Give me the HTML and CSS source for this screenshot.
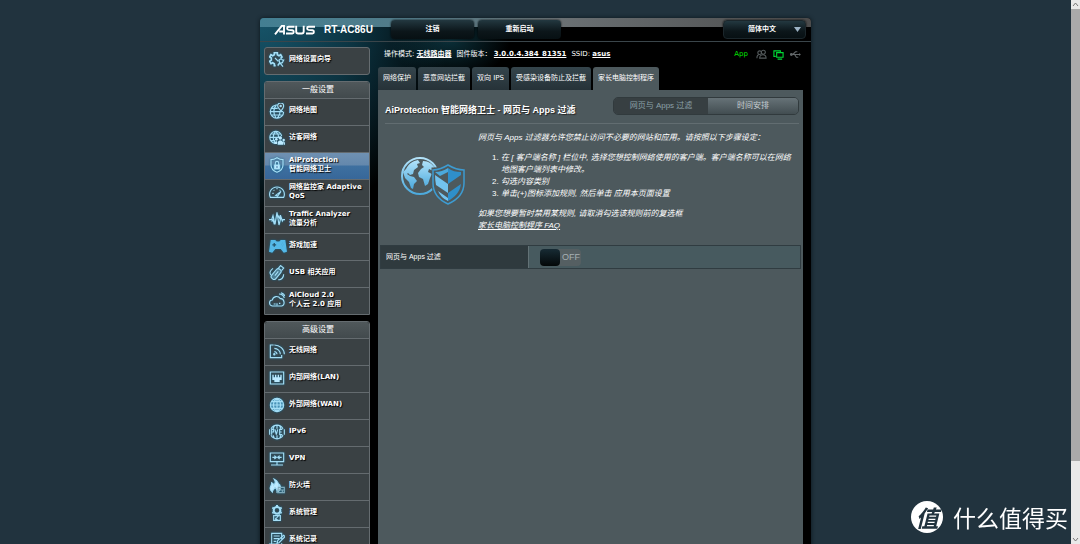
FILE: index.html
```html
<!DOCTYPE html>
<html lang="zh-CN">
<head>
<meta charset="utf-8">
<title>AiProtection - 网页与 Apps 过滤</title>
<link rel="stylesheet" href="styles.css">
</head>
<body>
<div class="viewport">
  <div class="shell">
    <header class="topbar">
      <a class="brand" href="#">
        <svg class="logo" viewBox="0 0 42 10" role="img" aria-label="ASUS"><g fill="none" stroke="#fff" stroke-width="1.9"><path d="M1 9.4 7.8.9H10V9.4M5.2 6.5H9"/><path d="M20.5 1.7h-6c-1.8 0-1.8 3 0 3.2l3.8.3c2 .2 1.8 3.3 0 3.3H12"/><path d="M22.2.8v5.7c0 1.4.6 2 2 2h3.5c1.4 0 2-.6 2-2V.8"/><path d="M41 1.7h-6.5c-1.8 0-1.8 3 0 3.2l4 .3c2 .2 1.8 3.3 0 3.3H32"/></g></svg>
        <span class="model">RT-AC86U</span>
      </a>
      <button class="top-btn">注销</button>
      <button class="top-btn">重新启动</button>
      <div class="language">
        <select aria-label="语言"><option>简体中文</option></select>
        <svg class="arrow" viewBox="0 0 7 5"><path d="M0 0h7L3.500 5z" fill="#9db4c6"/></svg>
      </div>
    </header>
    <div class="columns">
      <nav class="sidebar">
        <a class="item wizard" href="#"><svg viewBox="0 0 24 24"><path d="M10 20.500H8v-3L5.500 16l-2.500 1.500-2-3.500 2.500-2V9L1 7.500 3 4l2.500 1.500L8 4V1h4.500v3L15 5.500 17.500 4l2 3.500-2 1.500" stroke-width="2.500"/><path d="M9 9l5 5M13 20l3-4-1-4 3-2 2 2 2 0-2 4-4 1-3 4M16 16l5 6"/></svg><span>网络设置向导</span></a>
        <section class="group">
          <h2>一般设置</h2>
          <a class="item" href="#"><svg viewBox="0 0 24 24"><path d="M13 3a10 10 0 1 0 9 10M1 13h20M3 8h10M3 18h16M11 3c-5 5-5 14 0 20M12 23c4-4 5-9 4-11"/><path fill="#3c4245" d="M18 12c-3-4-5-5-5-7.500a4.500 4.500 0 0 1 9 0C22 7 21 8 18 12z"/><circle cx="17.500" cy="4.500" r="1"/></svg><span>网络地图</span></a>
          <a class="item" href="#"><svg viewBox="0 0 24 24"><path d="M19 9A9 9 0 1 0 9 20M1 11h17M3 6h14M3 16h6M10 2c-5 5-5 13 0 18M10 2c4 4 5 7 4 10"/><g fill="#bceaff" stroke="none"><circle cx="17" cy="12" r="2.500"/><circle cx="11" cy="14" r="2"/><circle cx="22" cy="15" r="1.800"/><path d="M13 22v-4q4-5 8 0v4zM8 21q0-5 4-4v4zM21 17q3 0 3 5h-2z"/></g></svg><span>访客网络</span></a>
          <a class="item active" href="#"><svg viewBox="0 0 24 24"><path d="M12 1C9 3 6 4 3 4v8c0 5 4 9 9 11 5-2 9-6 9-11V4c-3 0-6-1-9-3z"/><path fill="#bceaff" d="M8 12h8v6H8z"/><path d="M9.500 12V9a2.500 2.500 0 0 1 5 0v3"/><path d="M12 14v2" stroke="#326496"/></svg><span>AiProtection<br>智能网络卫士</span></a>
          <a class="item" href="#"><svg viewBox="0 0 24 24"><path d="M2 20a11 11 0 1 1 20 0zM5 14h2M7 9l1 1M12 6v2M17 9l-1 1M10 17l8-6-5 7z"/></svg><span>网络监控家 Adaptive QoS</span></a>
          <a class="item" href="#"><svg viewBox="0 0 24 24"><path d="M0 13h4l2-6 3 13L12 2l3 19 3-12 2 6 1-2h3M4 16l2-3 2 7M13 6l3 5 1-5"/></svg><span>Traffic Analyzer<br>流量分析</span></a>
          <a class="item" href="#"><svg class="wide" viewBox="0 0 24 20"><path fill="#55b9e8" stroke="#55b9e8" d="M3 3h5l2 2h4l2-2h5l2 14-3 1-4-5H8l-4 5-3-1z"/><path stroke="#24536a" d="M7 6v5M4.500 8.500h5M16 8h.1M19 8h.1M17.500 6h.1M17.500 10h.1"/></svg><span>游戏加速</span></a>
          <a class="item" href="#"><svg viewBox="0 0 24 24"><g transform="rotate(40 12 12)"><rect x="8" y="5" width="8" height="18" rx="3.500" fill="#4c7f96"/><path d="M9 5V0h6v5M12 9v8"/></g><path d="M3 15C0 12 2 8 6 5M14 22c4 1 8-3 8-8"/></svg><span>USB 相关应用</span></a>
          <a class="item" href="#"><svg viewBox="0 0 24 24"><path d="M5 21C-1 20 0 12 5 12c1-6 9-7 12-2 6-1 8 10 2 11zM7 18h3M12 17v3M15 17h2M15 3c4 0 7 3 8 6M18 1c3 1 5 3 6 5"/></svg><span>AiCloud 2.0<br>个人云 2.0 应用</span></a>
        </section>
        <section class="group">
          <h2>高级设置</h2>
          <a class="item" href="#"><svg viewBox="0 0 24 24"><path d="M7 3H2v19h17v-4"/><path d="M8 3c8 0 15 6 15 14M8 8c5 0 9 4 9 9M8 13c2 0 4 2 4 4"/><circle cx="8" cy="17" r="1"/></svg><span>无线网络</span></a>
          <a class="item" href="#"><svg viewBox="0 0 24 24"><path d="M2 3h20v18H2z"/><path fill="#bceaff" stroke="none" d="M5 7h2v4h2V7h2v4h2V7h2v4h2V7h2v8h-3v3H8v-3H5z"/></svg><span>内部网络(LAN)</span></a>
          <a class="item" href="#"><svg viewBox="0 0 24 24"><circle cx="12" cy="12" r="10" fill="#4993b7"/><path d="M2 12h20M4 7h16M4 17h16M12 2v20M12 2c-7 5-7 15 0 20M12 2c7 5 7 15 0 20"/></svg><span>外部网络(WAN)</span></a>
          <a class="item" href="#"><svg viewBox="0 0 24 24"><path d="M3 7c4-7 14-7 18 0M3 17c4 7 14 7 18 0M12 2v5M12 17v5M8 3L6 7M16 3l2 4M6 17l2 4M18 17l-2 4M1 8v8M4 16V8h3v4H4M9 8l2 8 2-8M20 8h-4v8h4M16 12h3M23 8v8"/></svg><span>IPv6</span></a>
          <a class="item" href="#"><svg viewBox="0 0 24 24"><path d="M2 3h20v13H2zM12 16v5M3 21h18M5 9.500h5M8 7l3 2.500L8 12M19 9.500h-5M16 7l-3 2.500 3 2.500"/></svg><span>VPN</span></a>
          <a class="item" href="#"><svg viewBox="0 0 24 24"><path fill="#bceaff" d="M5 21C-3 15 5 12 4 7c3 1 3 3 3 4 3-3 3-6 1-9 6 3 7 8 6 11l2-3c3 6 0 10-4 11 1-3-1-5-3-7-1 3-4 4-4 7z"/><path stroke="#7faabc" d="M14 14h9v8H13zM13 18h10M17 14v4M20 18v4"/></svg><span>防火墙</span></a>
          <a class="item" href="#"><svg viewBox="0 0 24 24"><circle cx="12" cy="8" r="5" stroke-width="3"/><path stroke-width="3" d="M12 0v3M5 4l2 1M19 4l-2 1M5 12l2-1M19 12l-2-1"/><path d="M7 15v8h10v-8M8 16h8M10 21l6-7M10 19v3h3"/></svg><span>系统管理</span></a>
          <a class="item" href="#"><svg viewBox="0 0 24 24"><path d="M19 11V2H4v16H1c0 3 1 4 4 4h11c3 0 3-2 3-5M7 6h9M7 10h8M7 14h4M5 18h8M12 17l1-4 9-8 2 2-9 9z"/></svg><span>系统记录</span></a>
        </section>
      </nav>
      <main class="main">
        <div class="status">
          <span>操作模式: <a href="#"><b>无线路由器</b></a></span>
          <span>固件版本： <a href="#"><b>3.0.0.4.384_81351</b></a></span>
          <span>SSID: <a href="#"><b>asus</b></a></span>
          <div class="indicators">
            <a class="app" href="#">App</a>
            <svg viewBox="0 0 12 12" stroke="#555b5d"><circle cx="4" cy="4" r="2"/><circle cx="8" cy="3.500" r="2.200"/><path d="M1 10c0-3 1-4 3-4M4 10c0-5 7-5 7 0z"/></svg>
            <svg viewBox="0 0 12 12" stroke="#00d936"><path d="M3 8H1V2h7v2M4 4h7v5H4zM5 11h5"/></svg>
            <svg viewBox="0 0 12 12" stroke="#626769"><path d="M1 6h10M3 6l3-3h2M5 6l2 3h2M10 5l1 1-1 1"/><circle cx="1.500" cy="6" r="1"/></svg>
          </div>
        </div>
        <nav class="tabs">
          <a href="#">网络保护</a><a href="#">恶意网站拦截</a><a href="#">双向 IPS</a><a href="#">受感染设备防止及拦截</a><a class="current" href="#">家长电脑控制程序</a>
        </nav>
        <section class="panel">
          <div class="heading">
            <h1>AiProtection 智能网络卫士 - 网页与 Apps 过滤</h1>
            <div class="segments"><button class="pressed">网页与 Apps 过滤</button><button>时间安排</button></div>
          </div>
          <div class="intro">
            <svg class="hero" viewBox="0 0 64 50">
              <defs><linearGradient id="sky" x2="0" y2="1"><stop stop-color="#b3e3fa"/><stop offset="1" stop-color="#4ba9dc"/></linearGradient></defs>
              <circle cx="19" cy="20" r="18" fill="none" stroke="url(#sky)" stroke-width="2"/>
              <path fill="url(#sky)" d="M5 13C8 7 12 5 17 4l2 3-3 1 1 3-4 3-1 4-3 1-2-2-1 1 3 2 4 1 3 4-3 3-1 5-2-1-2-6-4-4-2-6zM22 5c6 0 9 3 12 7l-2 3-4-2-1 3 4 2-2 4-2 6-3 2-2-7-4-2-1-4 3-4 3-2-2-2z"/>
              <path fill="#4d595d" stroke="#4d595d" stroke-width="3" d="M47 8c-5 4-10 5-15 5v14c0 11 7 18 15 22 9-4 16-11 16-22V13c-6 0-11-1-16-5z"/>
              <path fill="#4d595d" stroke="#3d9bd1" stroke-width="1.500" d="M47 9c-5 3-9 5-15 5v13c0 10 6 17 15 21 9-4 16-11 16-21V14c-6 0-11-2-16-5z"/>
              <path fill="#2f8fca" d="M47 12c4 3 8 4 13 4v3l-13 9zM47 37l13-9c-1 8-6 13-13 17z"/>
              <path fill="#72c3ef" d="M34 19l13 9v9l-12-8q-1-5-1-10zM37 35l10 7v3q-7-3-10-10z"/>
              <path fill="#4ba9dc" d="M34 16q7 0 13-4v4l-8 4z"/>
            </svg>
            <div class="copy">
              <p>网页与 Apps 过滤器允许您禁止访问不必要的网站和应用。请按照以下步骤设定：</p>
              <ol><li>在 [ 客户端名称 ] 栏位中, 选择您想控制网络使用的客户端。客户端名称可以在网络地图客户端列表中修改。</li><li>勾选内容类别</li><li>单击(+)图标添加规则, 然后单击 应用本页面设置</li></ol>
              <p>如果您想要暂时禁用某规则, 请取消勾选该规则前的复选框<br><a href="#">家长电脑控制程序 FAQ</a></p>
            </div>
          </div>
          <div class="setting">
            <label class="name" for="filter">网页与 Apps 过滤</label>
            <div class="value"><label class="switch"><input id="filter" type="checkbox"><span>OFF</span></label></div>
          </div>
        </section>
      </main>
    </div>
  </div>
</div>
<div class="scrollbar"><svg viewBox="0 0 9 9"><path d="M2 6l2.500-3L7 6"/></svg><div class="thumb"></div><svg viewBox="0 0 9 9"><path d="M2 3l2.500 3L7 3"/></svg></div>
<div class="watermark"><span class="seal">值</span><span>什么值得买</span></div>
</body>
</html>
```
FILE: styles.css
```css
* { box-sizing: border-box; }
body {
  margin: 0; height: 100vh; overflow: hidden; display: flex;
  background: #21333e; color: #fff;
  font: 7px/9px "DejaVu Sans", "Noto Sans CJK SC", sans-serif;
}
a { color: inherit; }
button, select, input { font: inherit; color: inherit; margin: 0; border: 0; padding: 0; }
h1, h2, p, ol { margin: 0; }
svg { display: block; flex: none; }

.viewport { flex: 1; min-width: 0; overflow: hidden; padding-top: 18px; }
.shell {
  width: 100%; max-width: 551px; margin: 0 auto; min-height: 100%;
  border-radius: 4px 4px 0 0; overflow: hidden;
  background:
    radial-gradient(ellipse 60px 40px at 190px 22px, #14586a88, transparent),
    radial-gradient(ellipse 190px 210px at 0 0, #17556a, #0c3442 50%, transparent),
    #000;
  box-shadow: 0 0 4px #0b151b;
}

.topbar {
  display: flex; align-items: center; gap: 4px; height: 24px;
  padding: 0 5px 0 14px; border-bottom: 1px solid #3a454a;
  background: linear-gradient(90deg, #437f92, #537b88 28%, #6a7073 55%, #4c4c4c) 0 0 / 100% 9px no-repeat;
}
.brand { display: flex; align-items: center; gap: 8px; width: 113px; text-decoration: none; }
.logo { width: 42px; height: 10px; }
.model { font: bold 10px/12px "Liberation Sans", sans-serif; white-space: nowrap; }
.top-btn, .language select {
  width: 83px; height: 19px; border-radius: 4px;
  background: linear-gradient(#233840, #0c161a 60%, #071013);
  font-weight: bold; text-align: center; box-shadow: 0 0 2px #000;
}
.language { position: relative; margin-left: auto; }
.language select { appearance: none; text-align-last: center; padding-right: 5px; border: 1px solid #1b262b; font-size: 7px; }
.arrow { position: absolute; right: 5px; top: 7px; width: 7px; height: 5px; pointer-events: none; }

.columns { display: flex; gap: 8px; padding: 0 8px 0 4px; }
.sidebar { width: 106px; flex: none; padding-top: 5px; display: flex; flex-direction: column; gap: 6px; }
.group { border: 1px solid #656c70; border-radius: 3px 3px 0 0; overflow: hidden; flex: none; }
.group h2 {
  height: 16px; font-weight: normal; font-size: 8px; line-height: 16px; text-align: center;
  padding-left: 2px; background: linear-gradient(#50585b, #424a4d);
}
.item {
  display: flex; align-items: center; gap: 4px; height: 27px; padding: 0 4px 3px;
  border-top: 1px solid #646b6f; background: #3a4144;
  font-weight: bold; text-decoration: none; text-shadow: 1px 1px 1px #000;
}
.item svg { width: 16px; height: 16px; fill: none; stroke: #a5def6; stroke-width: 1.7; filter: drop-shadow(0 0 1px #17678a); }
.item .wide { width: 18px; margin-right: -2px; }
.item.active { background: linear-gradient(#6f91b2 0, #6488ac 12px, #3e70a0 13px, #376799); }
.wizard { height: 28px; border: 1px solid #656c70; border-radius: 3px; }

.main { flex: 1; min-width: 0; display: flex; flex-direction: column; }
.status { display: flex; align-items: center; gap: 5px; height: 24px; padding: 0 2px 0 6px; }
.indicators { display: flex; align-items: center; gap: 6px; margin-left: auto; }
.indicators svg { width: 11px; height: 11px; fill: none; stroke-width: 1.2; }
.app { color: #00e600; text-decoration: none; margin-right: 2px; }
.tabs { display: flex; gap: 2px; height: 24px; padding-top: 1px; }
.tabs a {
  padding: 0 5px; line-height: 22px; text-decoration: none; white-space: nowrap;
  border-radius: 3px 3px 0 0; background: linear-gradient(#35454c, #263238);
}
.tabs .current { background: #4d595d; }
.panel { height: 520px; padding: 2px; background: #4d595d; font: 8px/12px "Liberation Sans", "Noto Sans CJK SC", sans-serif; }
.heading { display: flex; align-items: center; justify-content: space-between; height: 32px; margin: 0 2px 0 5px; border-bottom: 1px solid #626d71; }
h1 { font-size: 9px; line-height: 12px; white-space: nowrap; padding-top: 4px; text-shadow: 1px 1px 1px #222; }
.segments { display: flex; width: 186px; height: 18px; border: 1px solid #313a3d; border-radius: 5px; overflow: hidden; margin-bottom: 3px; }
.segments button { flex: 1; background: linear-gradient(#667277, #424d51); color: #c5cdd0; }
.segments .pressed { flex: none; width: 94px; background: #373f42; color: #8ca0a8; }
.intro { display: flex; height: 121px; padding: 8px 8px 0 21px; gap: 13px; font-style: italic; }
.hero { width: 64px; height: 50px; margin-top: 24px; }
.copy ol { margin: 8px 0; padding-left: 23px; }
.copy li::marker { font-style: normal; }
.setting { display: flex; height: 24px; border: 1px solid #303c41; }
.name { width: 147px; padding-left: 5px; line-height: 21px; font-size: 7px; background: #2f3a3e; }
.value { flex: 1; display: flex; align-items: center; padding-left: 11px; background: #475a5f; border-left: 1px solid #637276; }
.switch { display: flex; align-items: center; width: 41px; height: 17px; border-radius: 4px; background: #555f62; color: #a7b0b3; font-size: 9px; gap: 2px; }
.switch input { appearance: none; width: 20px; height: 17px; border-radius: 4px; background: linear-gradient(#172b34, #030708); }

.scrollbar { width: 9px; flex: none; display: flex; flex-direction: column; background: #e9e9e9; }
.scrollbar svg { width: 9px; height: 9px; fill: none; stroke: #777; }
.thumb { height: 83%; flex: none; margin-bottom: auto; background: #aaa; }
.watermark {
  position: fixed; right: 12px; bottom: 11px; display: flex; align-items: center; gap: 10px;
  font: 23px/32px "Noto Sans CJK SC", sans-serif;
}
.seal { width: 32px; height: 32px; border-radius: 50%; background: #fff; color: #21333e; font-style: italic; font-weight: bold; text-align: center; }
```
